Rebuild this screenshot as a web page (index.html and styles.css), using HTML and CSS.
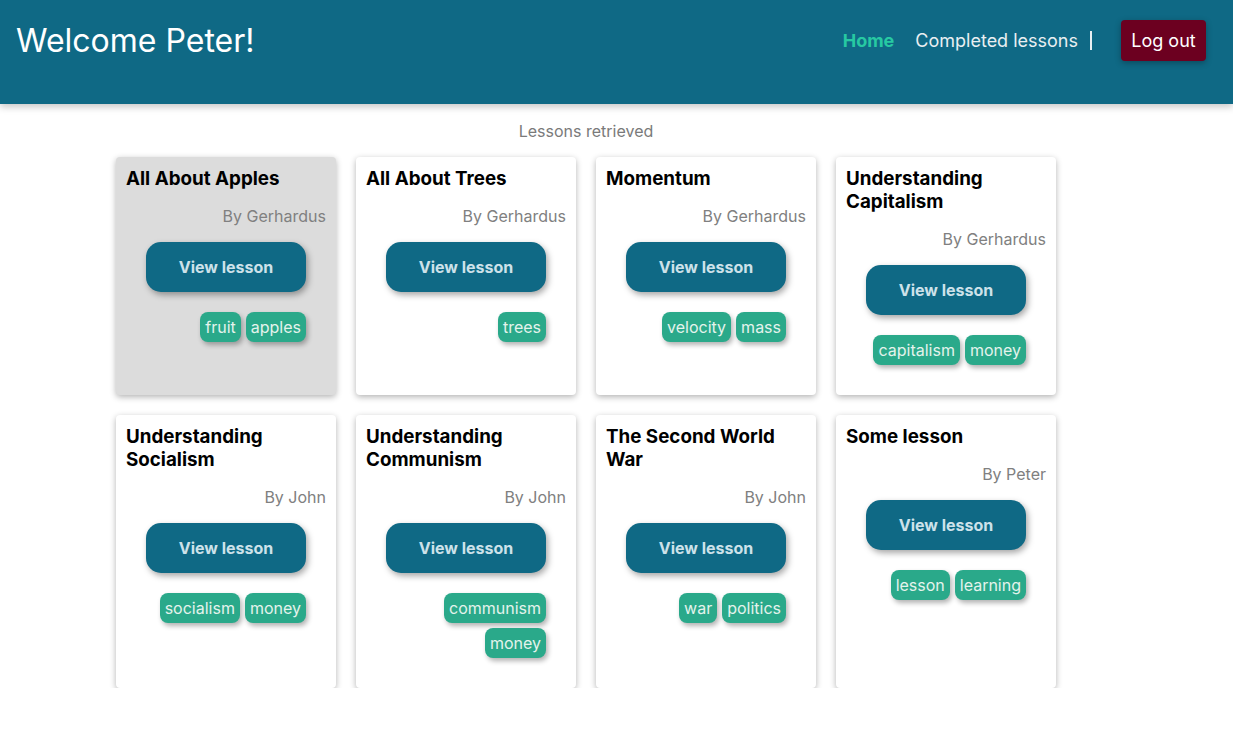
FILE: index.html
```html
<!DOCTYPE html>
<html lang="en">
<head>
<meta charset="utf-8">
<title>Lessons</title>
<link rel="stylesheet" href="styles.css">
</head>
<body>
<header class="topbar">
  <h1 class="welcome">Welcome Peter!</h1>
  <nav class="nav">
    <a class="nav-link active" href="#">Home</a>
    <a class="nav-link" href="#">Completed lessons</a>
    <span class="nav-sep"></span>
    <button class="logout">Log out</button>
  </nav>
</header>
<main class="page">
  <div class="lessons">
    <p class="status">Lessons retrieved</p>
    <div class="grid">
      <div class="card hover">
        <h2 class="title">All About Apples</h2>
        <p class="author">By Gerhardus</p>
        <button class="view">View lesson</button>
        <div class="tags"><span class="tag">fruit</span><span class="tag">apples</span></div>
      </div>
      <div class="card">
        <h2 class="title">All About Trees</h2>
        <p class="author">By Gerhardus</p>
        <button class="view">View lesson</button>
        <div class="tags"><span class="tag">trees</span></div>
      </div>
      <div class="card">
        <h2 class="title">Momentum</h2>
        <p class="author">By Gerhardus</p>
        <button class="view">View lesson</button>
        <div class="tags"><span class="tag">velocity</span><span class="tag">mass</span></div>
      </div>
      <div class="card">
        <h2 class="title">Understanding Capitalism</h2>
        <p class="author">By Gerhardus</p>
        <button class="view">View lesson</button>
        <div class="tags"><span class="tag">capitalism</span><span class="tag">money</span></div>
      </div>
      <div class="card">
        <h2 class="title">Understanding Socialism</h2>
        <p class="author">By John</p>
        <button class="view">View lesson</button>
        <div class="tags"><span class="tag">socialism</span><span class="tag">money</span></div>
      </div>
      <div class="card">
        <h2 class="title">Understanding Communism</h2>
        <p class="author">By John</p>
        <button class="view">View lesson</button>
        <div class="tags"><span class="tag">communism</span><span class="tag">money</span></div>
      </div>
      <div class="card">
        <h2 class="title">The Second World War</h2>
        <p class="author">By John</p>
        <button class="view">View lesson</button>
        <div class="tags"><span class="tag">war</span><span class="tag">politics</span></div>
      </div>
      <div class="card">
        <h2 class="title">Some lesson</h2>
        <p class="author">By Peter</p>
        <button class="view">View lesson</button>
        <div class="tags"><span class="tag">lesson</span><span class="tag">learning</span></div>
      </div>
    </div>
  </div>
</main>
</body>
</html>
```

FILE: styles.css
```css
* { box-sizing: border-box; }

body {
  margin: 0;
  font-family: Inter, "Noto Sans", sans-serif;
  background: #ffffff;
  color: #000;
}

.topbar {
  height: 104px;
  background: #0f6985;
  display: flex;
  justify-content: space-between;
  align-items: flex-start;
  padding: 20px 27px 0 16px;
  box-shadow: 0 3px 7px rgba(0, 0, 0, 0.22);
}

.welcome {
  margin: 0;
  font-size: 32px;
  font-weight: 400;
  line-height: 42px;
  color: #ffffff;
}

.nav {
  display: flex;
  align-items: center;
  height: 41px;
}

.nav-link {
  font-size: 18px;
  line-height: 22px;
  text-decoration: none;
  color: #e9eff2;
  margin-right: 21px;
}

.nav-link.active {
  font-weight: 700;
  color: #27c9a2;
}

.nav-link + .nav-link {
  margin-right: 12px;
}

.nav-sep {
  width: 2px;
  height: 19px;
  background: #e9eff2;
  margin-right: 29px;
}

.logout {
  font-family: inherit;
  font-size: 18px;
  color: #ffffff;
  background: #6c0020;
  border: none;
  border-radius: 4px;
  width: 85px;
  height: 41px;
  padding: 0;
  box-shadow: 0 2px 6px rgba(0, 0, 0, 0.3);
}

.page {
  max-width: 1001px;
  margin: 0 auto;
  padding-top: 18px;
}

.lessons {
  width: fit-content;
}

.status {
  margin: 0 0 16px;
  text-align: center;
  font-size: 16px;
  line-height: 19px;
  color: #7a7a7a;
}

.grid {
  display: grid;
  grid-template-columns: repeat(4, 220px);
  gap: 20px;
}

.card {
  background: #ffffff;
  border-radius: 4px;
  padding: 10px 10px 30px;
  box-shadow: 0 2px 6px rgba(0, 0, 0, 0.3);
  display: flex;
  flex-direction: column;
  align-items: center;
}

.card.hover {
  background: #dcdcdc;
}

.title {
  align-self: stretch;
  margin: 0;
  font-size: 18.8px;
  font-weight: 700;
  line-height: 23px;
  color: #000;
}

.author {
  align-self: stretch;
  margin: 17px 0 15px;
  text-align: right;
  font-size: 16px;
  line-height: 19px;
  color: #808080;
}

.view {
  width: 160px;
  height: 50px;
  margin-top: 1px;
  border: none;
  border-radius: 15px;
  background: #0f6985;
  color: #cde2ea;
  font-family: inherit;
  font-size: 16px;
  font-weight: 700;
  box-shadow: 2px 3px 6px rgba(0, 0, 0, 0.35);
}

.tags {
  width: 160px;
  margin-top: 20px;
  display: flex;
  flex-wrap: wrap;
  justify-content: flex-end;
  gap: 5px;
}

.tag {
  height: 30px;
  padding: 0 5px;
  border-radius: 8px;
  background: #2aa98a;
  color: #e4f3ec;
  font-size: 16px;
  line-height: 30px;
  box-shadow: 2px 3px 5px rgba(0, 0, 0, 0.3);
}
```
